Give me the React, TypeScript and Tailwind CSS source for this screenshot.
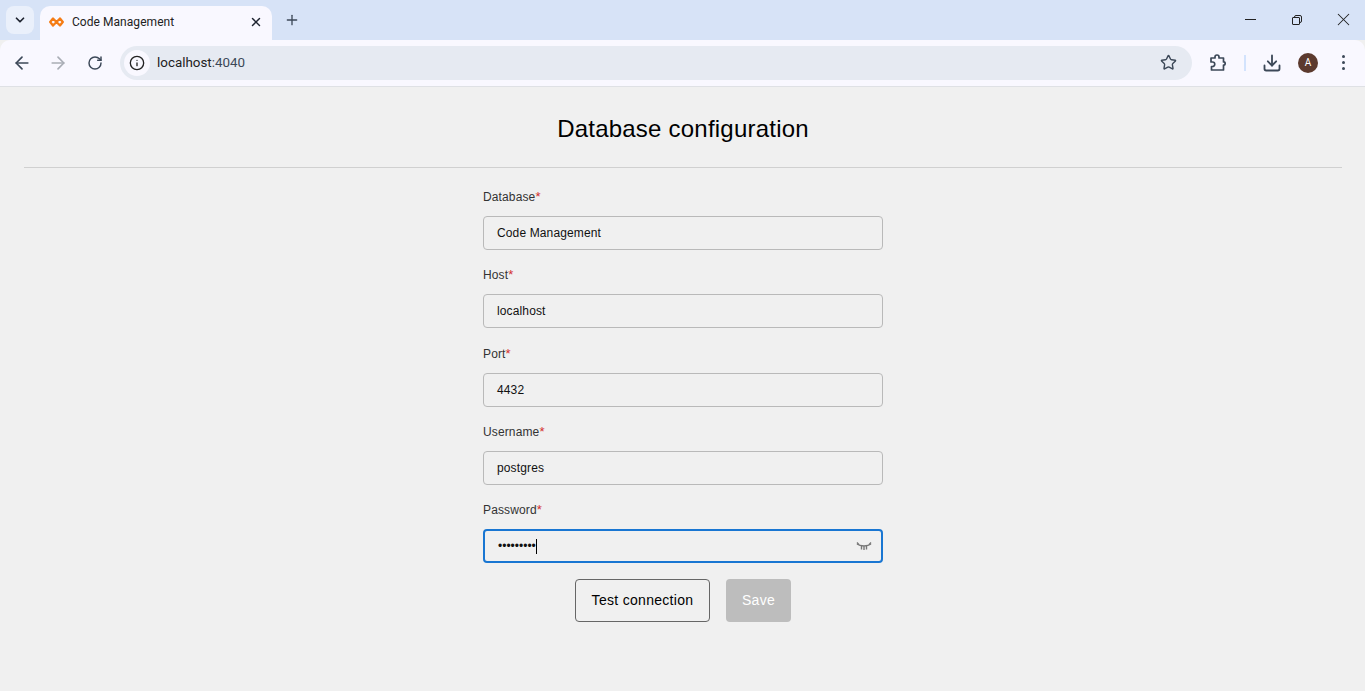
import { ArrowLeft, ArrowRight, ChevronDown, Download, Info, Plus, RotateCw, Star, X } from "lucide-react";

const fields = [
  { label: "Database", value: "Code Management" },
  { label: "Host", value: "localhost" },
  { label: "Port", value: "4432" },
  { label: "Username", value: "postgres" },
];

function Field({ label, value }: { label: string; value: string }) {
  return (
    <div className="flex flex-col">
      <div className="h-[20px] mb-[9px] text-[12px] leading-[20px] tracking-[0.13px] text-[#333333]">
        {label}
        <span className="text-[#d32f2f] text-[13px]">*</span>
      </div>
      <div className="h-[34px] flex items-center px-[13px] border border-[#b9b9b9] rounded-[4px] text-[12px] tracking-[0.13px] text-[#111111]">
        {value}
      </div>
    </div>
  );
}

function Logo() {
  return (
    <svg width="15" height="10" viewBox="0 0 15 10" fill="none">
      <path d="M4 1.500 1.200 5 4 8.500 7.500 5Zm7 0L7.500 5 11 8.500 13.800 5Z" stroke="#f57c14" strokeWidth="2.300" strokeLinejoin="round" />
    </svg>
  );
}

function Extension() {
  return (
    <svg width="18" height="18" viewBox="0 0 18 18" fill="none" stroke="#3c4858" strokeWidth="1.700" strokeLinejoin="round">
      <path d="M2 4h4V3a2 2 0 0 1 4 0v1h4.500v4h1a2 2 0 0 1 0 3h-1v5H2.500v-3.500h1a2.200 2.200 0 0 0 0-4.500h-1.500Z" />
    </svg>
  );
}

function EyeOff() {
  return (
    <svg width="16" height="9" viewBox="0 0 16 9" fill="none" stroke="#777777" strokeWidth="1.400">
      <path d="M1 2c3.500 2.600 10.500 2.600 14 0M1 .5l2.200 2.500M15 .5l-2.200 2.500M5.500 4v3.500M8 4.500V8M10.500 4v3.500" />
    </svg>
  );
}

export default function App() {
  return (
    <div className="h-[691px] flex flex-col bg-[#f0f0f0] font-['Liberation_Sans',sans-serif] overflow-hidden">
      {/* 탭 영역 */}
      <div className="h-[40px] bg-[#d7e3f7] flex items-end pl-[6px] shrink-0 font-['Roboto',sans-serif]">
        <div className="w-[28px] h-[28px] mb-[6px] rounded-[8px] bg-[#eaf0fb] flex items-center justify-center">
          <ChevronDown size={14} strokeWidth={3} className="text-[#1f2430]" />
        </div>
        <div className="w-[232px] h-[34px] ml-[6px] rounded-t-[10px] bg-[#f9f8ff] flex items-center pl-[9px] pr-[9px] pb-[3px]">
          <Logo />
          <span className="ml-[8px] text-[12px] tracking-[0.05px] text-[#222222] flex-1">Code Management</span>
          <X size={14} strokeWidth={2.5} className="text-[#1f2430]" />
        </div>
        <Plus size={16} strokeWidth={2} className="ml-[12px] mb-[12px] text-[#3c4858]" />
        <div className="flex-1" />
        <div className="flex items-center pr-[11px] mb-[10px]">
          <div className="w-[11px] h-px bg-[#222222]" />
          <div className="ml-[36px] relative w-[10px] h-[10px]">
            <div className="absolute top-0 right-0 w-[8px] h-[8px] border border-[#222222] rounded-[2px]" />
            <div className="absolute bottom-0 left-0 w-[8px] h-[8px] border border-[#222222] rounded-[1px] bg-[#d7e3f7]" />
          </div>
          <X size={21} strokeWidth={1.2} className="ml-[31px] text-[#222222]" />
        </div>
      </div>

      {/* 툴바 */}
      <div className="h-[47px] bg-[#f9f8ff] border-b border-[#dfe1e5] rounded-t-[10px] flex items-center pl-[12px] pb-px shrink-0 font-['Roboto',sans-serif]">
        <ArrowLeft size={20} strokeWidth={2} className="text-[#3c4858]" />
        <ArrowRight size={20} strokeWidth={2} className="ml-[16px] text-[#a9adb5]" />
        <RotateCw size={16} strokeWidth={2.2} className="ml-[19px] text-[#3c4858]" />
        <div className="ml-[17px] w-[1072px] h-[34px] rounded-full bg-[#e6eaf2] flex items-center pl-[4px] pr-[15px]">
          <div className="w-[26px] h-[26px] rounded-full bg-[#f9f8ff] flex items-center justify-center">
            <Info size={16} strokeWidth={2} className="text-[#222222]" />
          </div>
          <span className="ml-[7px] pt-px text-[13.4px] flex-1 text-[#3c4858]">
            <span className="text-[#222222]">localhost</span>:4040
          </span>
          <Star size={17} strokeWidth={2} className="text-[#3c4858]" />
        </div>
        <div className="ml-[17px]"><Extension /></div>
        <div className="ml-[17px] w-[2px] h-[16px] bg-[#d3e3fd]" />
        <Download size={20} strokeWidth={2.2} className="ml-[16px] text-[#3c4858]" />
        <div className="ml-[16px] w-[20px] h-[20px] rounded-full bg-[#5c3a2e] text-white text-[10px] flex items-center justify-center">A</div>
        <div className="ml-[24px] flex flex-col gap-[3px]">
          <div className="w-[3px] h-[3px] rounded-full bg-[#3c4858]" />
          <div className="w-[3px] h-[3px] rounded-full bg-[#3c4858]" />
          <div className="w-[3px] h-[3px] rounded-full bg-[#3c4858]" />
        </div>
      </div>

      {/* 페이지 */}
      <div className="flex-1 pl-[24px] pr-[23px]">
        <h1 className="h-[81px] pt-[4px] flex items-center justify-center text-[24px] tracking-[0.22px] text-black border-b border-[#d0d0d0]">
          Database configuration
        </h1>
        <div className="w-[400px] mx-auto pt-[19px] flex flex-col gap-[15.3px]">
          {fields.map((f) => (
            <Field key={f.label} label={f.label} value={f.value} />
          ))}
          <div className="flex flex-col">
            <div className="h-[20px] mb-[9px] text-[12px] leading-[20px] tracking-[0.13px] text-[#333333]">
              Password<span className="text-[#d32f2f] text-[13px]">*</span>
            </div>
            <div className="h-[34px] flex items-center pl-[13px] pr-[9px] border-2 border-[#1976d2] rounded-[4px] text-[12px] text-[#111111]">
              <span>•••••••••</span>
              <span className="w-px h-[15px] bg-black" />
              <span className="flex-1" />
              <EyeOff />
            </div>
          </div>
        </div>
        <div className="flex justify-center gap-[16px] mt-[16px]">
          <button className="w-[135px] h-[43px] rounded-[4px] border border-[#666666] text-[14px] text-black tracking-[0.3px]">
            Test connection
          </button>
          <button className="w-[65px] h-[43px] rounded-[4px] bg-[#bdbdbd] text-[14px] text-white tracking-[0.3px]">
            Save
          </button>
        </div>
      </div>
    </div>
  );
}
